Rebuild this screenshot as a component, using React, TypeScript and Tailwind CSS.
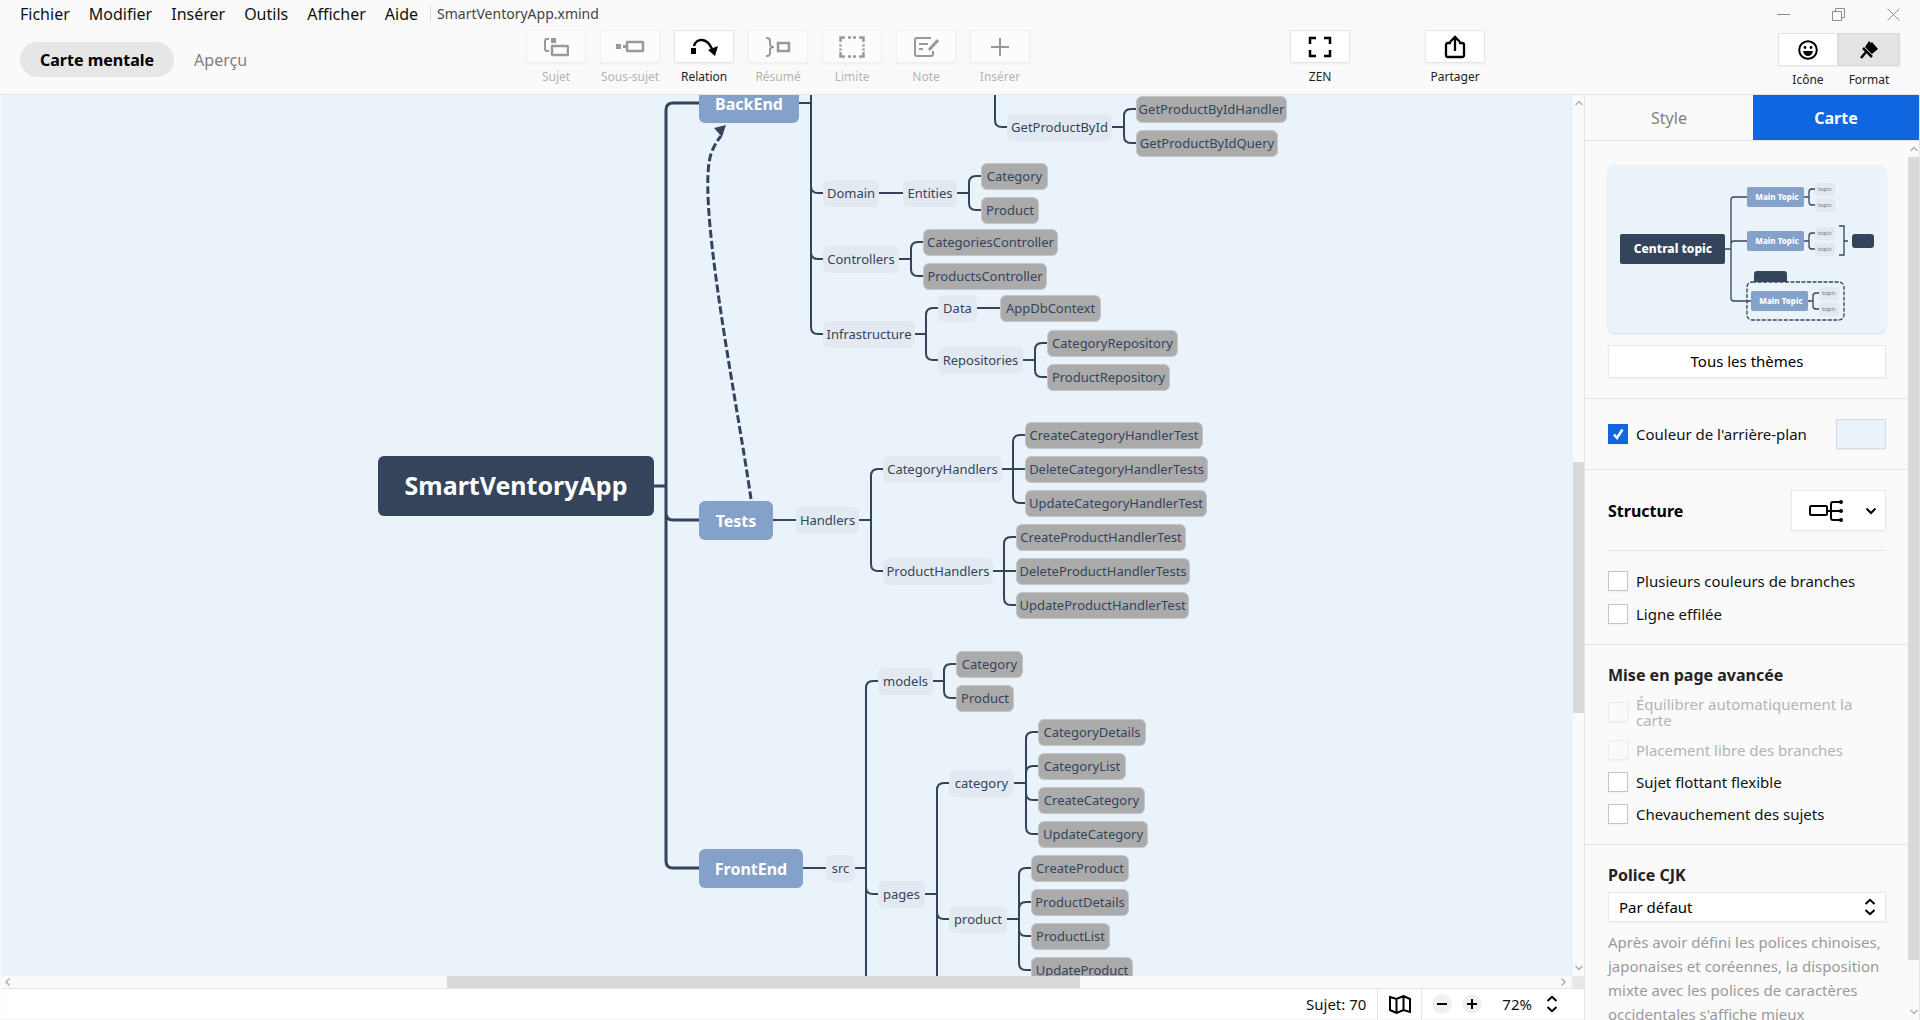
import React from "react";

type Kind = "root" | "main" | "sub" | "leaf";

interface Topic {
  label: string;
  kind: Kind;
  x: number;
  y: number;
  w: number;
  children?: Topic[];
  /** Branches that start or end outside the visible part of the map. */
  up?: boolean;
  down?: boolean;
}

const leaf = (label: string, x: number, y: number, w: number): Topic => ({ label, kind: "leaf", x, y, w });

const sub = (label: string, x: number, y: number, w: number, children?: Topic[], down?: boolean): Topic => ({
  label,
  kind: "sub",
  x,
  y,
  w,
  children,
  down,
});

const tree: Topic = {
  label: "SmartVentoryApp",
  kind: "root",
  x: 377,
  y: 391,
  w: 276,
  children: [
    {
      label: "BackEnd",
      kind: "main",
      x: 698,
      y: 8,
      w: 100,
      up: true,
      children: [
        sub("Domain", 822, 98, 56, [
          sub("Entities", 902, 98, 54, [leaf("Category", 980, 81, 67), leaf("Product", 980, 115, 58)]),
        ]),
        sub("Controllers", 822, 164, 76, [
          leaf("CategoriesController", 922, 147, 135),
          leaf("ProductsController", 922, 181, 124),
        ]),
        sub("Infrastructure", 822, 239, 92, [
          sub("Data", 937, 213, 39, [leaf("AppDbContext", 999, 213, 101)]),
          sub("Repositories", 937, 265, 85, [
            leaf("CategoryRepository", 1046, 248, 131),
            leaf("ProductRepository", 1046, 282, 123),
          ]),
        ]),
      ],
    },
    {
      label: "Tests",
      kind: "main",
      x: 698,
      y: 425,
      w: 74,
      children: [
        sub("Handlers", 795, 425, 63, [
          sub("CategoryHandlers", 882, 374, 119, [
            leaf("CreateCategoryHandlerTest", 1024, 340, 178),
            leaf("DeleteCategoryHandlerTests", 1024, 374, 183),
            leaf("UpdateCategoryHandlerTest", 1024, 408, 182),
          ]),
          sub("ProductHandlers", 882, 476, 110, [
            leaf("CreateProductHandlerTest", 1015, 442, 170),
            leaf("DeleteProductHandlerTests", 1015, 476, 174),
            leaf("UpdateProductHandlerTest", 1015, 510, 173),
          ]),
        ]),
      ],
    },
    {
      label: "FrontEnd",
      kind: "main",
      x: 698,
      y: 773,
      w: 104,
      children: [
        sub(
          "src",
          825,
          773,
          29,
          [
            sub("models", 877, 586, 55, [leaf("Category", 955, 569, 67), leaf("Product", 955, 603, 58)]),
            sub(
              "pages",
              877,
              799,
              47,
              [
                sub("category", 948, 688, 65, [
                  leaf("CategoryDetails", 1037, 637, 108),
                  leaf("CategoryList", 1037, 671, 88),
                  leaf("CreateCategory", 1037, 705, 107),
                  leaf("UpdateCategory", 1037, 739, 110),
                ]),
                sub("product", 948, 824, 58, [
                  leaf("CreateProduct", 1030, 773, 98),
                  leaf("ProductDetails", 1030, 807, 98),
                  leaf("ProductList", 1030, 841, 79),
                  leaf("UpdateProduct", 1030, 875, 102),
                ]),
              ],
              true,
            ),
          ],
          true,
        ),
      ],
    },
  ],
};

const offscreenParentBranch: Topic = sub("GetProductById", 1006, 32, 105, [
  leaf("GetProductByIdHandler", 1135, 14, 151),
  leaf("GetProductByIdQuery", 1135, 48, 142),
]);

const kindClass: Record<Kind, string> = {
  root: "h-[60px] rounded-md bg-[#34455b] text-[25px] font-bold text-white",
  main: "h-[39px] rounded-md bg-[#84a1c9] text-[16px] font-bold text-white",
  sub: "h-[27px] rounded-md bg-[#e2e9f1] text-[13px] text-[#34455b]",
  leaf: "h-[27px] rounded-md border border-[#c3c7ca] bg-[#ababab] text-[13px] text-[#34455b]",
};

/** Distance from a topic's top edge to the line that meets it. */
const rise: Record<Kind, number> = { root: 30, main: 19, sub: 13, leaf: 13 };

const flatten = (t: Topic): Topic[] => [t, ...(t.children ?? []).flatMap(flatten)];

function branchPath(t: Topic): string {
  const kids = t.children ?? [];
  if (!kids.length) return "";
  const end = t.x + t.w;
  const trunk = kids[0].x - 12 + (t.kind === "root" ? -21 : 0);
  const r = 7;
  let d = `M${end} ${t.y}H${trunk}`;
  for (const k of kids) {
    if (k.y === t.y) d += `M${trunk} ${t.y}H${k.x}`;
    else {
      const s = k.y > t.y ? -r : r;
      d += `M${trunk} ${t.y}V${k.y + s}Q${trunk} ${k.y} ${trunk + r} ${k.y}H${k.x}`;
    }
  }
  if (t.up) d += `M${trunk} ${t.y}V-10`;
  if (t.down) d += `M${trunk} ${t.y}V1200`;
  return d;
}

function MindMap() {
  const topics = [...flatten(tree), ...flatten(offscreenParentBranch)];
  return (
    <div className="relative min-h-0 min-w-0 flex-1 overflow-hidden bg-[#ebf3fa] font-['Noto_Sans',sans-serif]">
      <svg className="absolute inset-0 h-full w-full" fill="none" stroke="#34455b" aria-hidden="true">
        {topics.map((t, i) => (
          <path key={i} d={branchPath(t)} strokeWidth={t.kind === "root" ? 3 : 2} />
        ))}
        <path d="M994 -10V25Q994 32 1001 32H1006" strokeWidth="2" />
        <path d="M750 404C735 300 692 90 712 54Q715 47 720 41" strokeWidth="3" strokeDasharray="8 3" />
        <path d="M725 30L713 33L721 42Z" fill="#34455b" stroke="none" />
      </svg>
      {topics.map((t, i) => (
        <div
          key={i}
          className={`absolute flex items-center justify-center whitespace-nowrap ${kindClass[t.kind]}`}
          style={{ left: t.x, top: t.y - rise[t.kind], width: t.w }}
        >
          {t.label}
        </div>
      ))}
    </div>
  );
}

const menus = ["Fichier", "Modifier", "Insérer", "Outils", "Afficher", "Aide"];

function Glyph({ w, h, children }: { w: number; h: number; children: React.ReactNode }) {
  return (
    <svg width={w} height={h} viewBox={`0 0 ${w} ${h}`} fill="none" stroke="currentColor" strokeWidth="2" aria-hidden="true">
      {children}
    </svg>
  );
}

const tools = [
  {
    label: "Sujet",
    icon: (
      <Glyph w={26} h={20}>
        <path d="M6 2H4Q2 2 2 4V12Q2 14 4 14H6" />
        <path d="M8 1h5v5h-5z" fill="currentColor" stroke="none" />
        <rect x="9" y="9" width="16" height="9" strokeWidth="2.5" rx="0.5" />
      </Glyph>
    ),
  },
  {
    label: "Sous-sujet",
    icon: (
      <Glyph w={30} h={20}>
        <path d="M1 7h5v5H1zM8 8h4v3H8z" fill="currentColor" stroke="none" />
        <rect x="12" y="5" width="16" height="9" strokeWidth="2.5" rx="0.5" />
      </Glyph>
    ),
  },
  {
    label: "Relation",
    active: true,
    icon: (
      <Glyph w={28} h={20}>
        <path d="M1 11h5v6H1zM18 13L28 9L25 19Z" fill="currentColor" stroke="none" />
        <path d="M4 9C6 1 17 0 22 12" strokeWidth="2.5" />
      </Glyph>
    ),
  },
  {
    label: "Résumé",
    icon: (
      <Glyph w={26} h={22}>
        <path d="M1 2H2Q5 2 5 5V8Q5 11 9 11Q5 11 5 14V17Q5 20 2 20H1" />
        <rect x="13" y="7" width="11" height="8" strokeWidth="2.5" />
      </Glyph>
    ),
  },
  {
    label: "Limite",
    icon: (
      <Glyph w={26} h={22}>
        <path
          d="M1.500 6V1.500H6M9 1.500h3M14 1.500h3M20 1.500H24.500V6M24.500 8.500v2M24.500 12.500v2M24.500 16V20.500H20M17 20.500h-3M12 20.500h-3M6 20.500H1.500V16M1.500 14.500v-2M1.500 10.500v-2"
          strokeWidth="2.5"
        />
      </Glyph>
    ),
  },
  {
    label: "Note",
    icon: (
      <Glyph w={26} h={22}>
        <path d="M18 2H4Q2 2 2 4V18Q2 20 4 20H18Q20 20 20 18V15M6 8h9M6 13h4" />
        <path d="M25 4L16 14" strokeWidth="3" />
      </Glyph>
    ),
  },
  {
    label: "Insérer",
    icon: (
      <Glyph w={20} h={20}>
        <path d="M10 1V19M1 10H19" />
      </Glyph>
    ),
  },
];

function ToolButton({ label, icon, active }: { label: string; icon: React.ReactNode; active?: boolean }) {
  return (
    <button
      className={`flex flex-col items-center gap-[5px] text-xs ${active ? "text-[#222]" : "text-[#b4b4b4]"}`}
      disabled={!active}
    >
      <span
        className={`flex h-[33px] w-[60px] items-center justify-center border shadow-xs ${
          active ? "border-[#e6e6e6] bg-white text-black" : "border-[#f1f1f1] bg-[#fcfcfc] text-[#999]"
        }`}
      >
        {icon}
      </span>
      <span className="leading-[18px]">{label}</span>
    </button>
  );
}

function Header() {
  return (
    <header className="flex h-[95px] shrink-0 flex-col border-b border-[#e4e4e4]">
      <div className="flex h-7 items-center">
        <nav className="flex items-center gap-[19px] pl-5 text-[16px] text-[#111]">
          {menus.map((m) => (
            <button key={m} className="leading-5">
              {m}
            </button>
          ))}
        </nav>
        <span className="ml-3 border-l border-[#ddd] pl-1.5 text-[14px] leading-4 text-[#444]">SmartVentoryApp.xmind</span>
        <div className="ml-auto flex items-center gap-[42px] pr-5 text-[#8c8c8c]">
          <button aria-label="Réduire">
            <svg width="13" height="13" viewBox="0 0 13 13" fill="none" stroke="currentColor">
              <path d="M0 6.500H13" />
            </svg>
          </button>
          <button aria-label="Restaurer">
            <svg width="13" height="13" viewBox="0 0 13 13" fill="none" stroke="currentColor">
              <path d="M0.500 3.500h9v9h-9zM3.500 3.500v-3h9v9h-3" />
            </svg>
          </button>
          <button aria-label="Fermer">
            <svg width="13" height="13" viewBox="0 0 13 13" fill="none" stroke="currentColor">
              <path d="M0.500 0.500L12.500 12.500M12.500 0.500L0.500 12.500" />
            </svg>
          </button>
        </div>
      </div>
      <div className="flex flex-1 items-start pr-5 pl-5">
        <div className="mt-3.5 flex flex-[505] items-center gap-5">
          <button className="h-[35px] rounded-full bg-[#e6e6e6] px-5 text-[16px] font-bold text-black">Carte mentale</button>
          <button className="text-[16px] text-[#808080]">Aperçu</button>
        </div>
        <div className="mt-0.5 flex gap-3.5">
          {tools.map((t) => (
            <ToolButton key={t.label} {...t} />
          ))}
        </div>
        <div className="mt-0.5 ml-[260px] flex gap-[75px]">
          <ToolButton
            label="ZEN"
            active
            icon={
              <Glyph w={24} h={22}>
                <path d="M2 8V2H8M16 2H22V8M22 14V20H16M8 20H2V14" strokeWidth="2.5" />
              </Glyph>
            }
          />
          <ToolButton
            label="Partager"
            active
            icon={
              <Glyph w={22} h={24}>
                <path d="M7 8H4Q2 8 2 10V20Q2 22 4 22H18Q20 22 20 20V10Q20 8 18 8H15" strokeWidth="2.3" />
                <path d="M11 16V3M6 7L11 2L16 7" strokeWidth="2.3" />
              </Glyph>
            }
          />
        </div>
        <div className="mt-[5px] flex flex-[414] justify-end text-xs text-[#222]">
          <button className="flex w-[60px] flex-col items-center gap-[5px]">
            <span className="flex h-[33px] w-full items-center justify-center border border-[#e2e2e2] bg-white text-black shadow-xs">
              <Glyph w={20} h={20}>
                <circle cx="10" cy="10" r="8.800" />
                <path d="M5 11H15Q14 16 10 16T5 11Z" fill="currentColor" stroke="none" />
                <circle cx="7" cy="7.500" r="1.400" fill="currentColor" stroke="none" />
                <circle cx="13" cy="7.500" r="1.400" fill="currentColor" stroke="none" />
              </Glyph>
            </span>
            <span className="leading-[18px]">Icône</span>
          </button>
          <button className="flex w-[62px] flex-col items-center gap-[5px]">
            <span className="flex h-[33px] w-full items-center justify-center border border-[#d8d8d8] bg-[#e3e3e3] text-black shadow-xs">
              <Glyph w={20} h={20}>
                <path d="M10 1L12 3L13 2L19 9L13 14L6 7Z" fill="currentColor" stroke="none" />
                <path d="M4 8L13 17M7 12L2 18" strokeWidth="2.500" />
              </Glyph>
            </span>
            <span className="leading-[18px]">Format</span>
          </button>
        </div>
      </div>
    </header>
  );
}

function Chevron({ d, className = "" }: { d: string; className?: string }) {
  return (
    <svg width="10" height="10" viewBox="0 0 10 10" fill="none" stroke="#b0b0b0" strokeWidth="1.5" className={className} aria-hidden="true">
      <path d={d} />
    </svg>
  );
}

const UP = "M1.500 7L5 3.500L8.500 7";
const DOWN = "M1.500 3L5 6.500L8.500 3";
const LEFT = "M6.500 1.500L3 5L6.500 8.500";
const RIGHT = "M3.500 1.500L7 5L3.500 8.500";

function VScroll({ before, thumb, after }: { before: string; thumb: string; after: string }) {
  return (
    <div className="flex w-[11px] shrink-0 flex-col items-center bg-[#fafafa]">
      <div className="flex h-4 shrink-0 items-center">
        <Chevron d={UP} />
      </div>
      <div className={before} />
      <div className={`w-full bg-[#d9d9d9] ${thumb}`} />
      <div className={after} />
      <div className="flex h-4 shrink-0 items-center">
        <Chevron d={DOWN} />
      </div>
    </div>
  );
}

function UpDown() {
  return (
    <svg width="12" height="18" viewBox="0 0 12 18" fill="none" stroke="black" strokeWidth="2" aria-hidden="true">
      <path d="M1.500 6L6 1.800L10.500 6M1.500 12L6 16.200L10.500 12" />
    </svg>
  );
}

function StatusBar() {
  return (
    <footer className="flex h-[31px] shrink-0 items-stretch justify-end border-b border-[#f4f4f4] bg-white text-[15px] text-[#111]">
      <span className="flex items-center pr-[11px]">Sujet: 70</span>
      <button className="flex w-[45px] items-center justify-center border-x border-[#e4e4e4]" aria-label="Plan">
        <svg width="22" height="19" viewBox="0 0 22 19" fill="none" stroke="black" strokeWidth="2" aria-hidden="true">
          <path d="M1 2L7.500 4L14.500 1L21 4V17L14.500 15L7.500 18L1 15ZM7.500 4V18M14.500 1V15" />
        </svg>
      </button>
      <div className="flex items-center gap-2.5 pl-2.5">
        <button className="flex size-5 items-center justify-center rounded-full bg-[#f0f0f0]" aria-label="Zoom arrière">
          <svg width="10" height="10" viewBox="0 0 10 10" stroke="black" strokeWidth="2">
            <path d="M0 5H10" />
          </svg>
        </button>
        <button className="flex size-5 items-center justify-center rounded-full bg-[#f0f0f0]" aria-label="Zoom avant">
          <svg width="10" height="10" viewBox="0 0 10 10" stroke="black" strokeWidth="2">
            <path d="M0 5H10M5 0V10" />
          </svg>
        </button>
      </div>
      <button className="flex items-center gap-3.5 pr-[26px] pl-5">
        72%
        <UpDown />
      </button>
    </footer>
  );
}

function ThemePreview() {
  const mains = [
    { x: 139, y: 32, t: 207 },
    { x: 139, y: 76, t: 207 },
    { x: 143, y: 136, t: 211 },
  ];
  return (
    <svg
      viewBox="0 0 278 168"
      className="w-full rounded-md bg-[#ebf3fa] font-['Noto_Sans',sans-serif] shadow"
      role="img"
      aria-label="Thème"
    >
      <g fill="none" stroke="#34455b" strokeWidth="1.300">
        <path d="M117 84H123M139 32H126Q123 32 123 35V133Q123 136 126 136H143M123 79Q123 76 126 76H139" />
        {mains.map((m) => (
          <path
            key={m.y}
            d={`M${m.x + 57} ${m.y}H${m.t - 6}M${m.t} ${m.y - 8}H${m.t - 3}Q${m.t - 6} ${m.y - 8} ${m.t - 6} ${m.y - 5}V${m.y + 5}Q${m.t - 6} ${m.y + 8} ${m.t - 3} ${m.y + 8}H${m.t}`}
          />
        ))}
        <path d="M231 61H236V90H231M236 76H240" />
        <rect x="139" y="117" width="97" height="38" rx="5" strokeDasharray="4 1.500" />
      </g>
      <rect x="12" y="69" width="105" height="30" rx="2" fill="#34455b" />
      <text x="65" y="88" textAnchor="middle" fill="white" fontSize="12" fontWeight="800">
        Central topic
      </text>
      {mains.map((m) => (
        <g key={m.y}>
          <rect x={m.x} y={m.y - 10} width="57" height="20" rx="2" fill="#84a1c9" />
          <text x={m.x + 30} y={m.y + 3} textAnchor="middle" fill="white" fontSize="8" fontWeight="800">
            Main Topic
          </text>
          {[-8, 8].map((o) => (
            <g key={o}>
              <rect x={m.t} y={m.y + o - 6} width="20" height="13" rx="2" fill="#e2e9f1" />
              <text x={m.t + 10} y={m.y + o + 2} textAnchor="middle" fill="#6b7889" fontSize="6">
                topic
              </text>
            </g>
          ))}
        </g>
      ))}
      <rect x="244" y="69" width="22" height="14" rx="3" fill="#34455b" />
      <path d="M146 117V109Q146 106 149 106H176Q179 106 179 109V117Z" fill="#34455b" />
    </svg>
  );
}

function Check({ label, checked, disabled }: { label: string; checked?: boolean; disabled?: boolean }) {
  return (
    <label className={`flex items-center gap-2 ${disabled ? "text-[#b4b4b4]" : "text-[#111]"}`}>
      <span className="relative flex size-5 shrink-0">
        <input
          type="checkbox"
          defaultChecked={checked}
          disabled={disabled}
          className="peer size-5 appearance-none border border-[#c4c4c4] bg-white shadow-xs checked:border-[#1066e0] checked:bg-[#1066e0] disabled:border-[#ececec] disabled:bg-[#fafafa]"
        />
        <svg
          viewBox="0 0 20 20"
          className="pointer-events-none absolute inset-0 hidden peer-checked:block"
          fill="none"
          stroke="white"
          strokeWidth="2.500"
          aria-hidden="true"
        >
          <path d="M6 10.500L9 14L14.500 5.500" />
        </svg>
      </span>
      <span className="leading-4">{label}</span>
    </label>
  );
}

function Sidebar() {
  return (
    <aside className="flex w-[336px] shrink-0 flex-col border-r border-l border-[#e4e4e4] bg-[#fafafa]">
      <div className="flex h-[46px] shrink-0 border-b border-[#e4e4e4] text-[16px]">
        <button className="flex-1 text-[#808080]">Style</button>
        <button className="w-[166px] bg-[#1066e0] font-bold text-white">Carte</button>
      </div>
      <div className="flex min-h-0 flex-1">
        <div className="min-w-0 flex-1 overflow-hidden text-[15px]">
          <section className="flex flex-col gap-3 pt-6 pr-[22px] pb-5 pl-[23px]">
            <ThemePreview />
            <button className="h-[33px] border border-[#e8e8e8] bg-white text-black shadow-xs">Tous les thèmes</button>
          </section>
          <section className="flex items-center justify-between border-t border-[#e4e4e4] py-5 pr-[22px] pl-[23px]">
            <Check label="Couleur de l'arrière-plan" checked />
            <button
              className="h-[30px] w-[50px] border border-[#d3dae1] bg-[#ebf3fa] shadow-xs"
              aria-label="Choisir la couleur de l'arrière-plan"
            />
          </section>
          <section className="border-t border-[#e4e4e4] pt-5 pr-[22px] pb-5 pl-[23px]">
            <div className="flex items-center justify-between pb-[19px]">
              <h2 className="text-[16px] font-bold text-black">Structure</h2>
              <button
                className="flex h-[41px] w-[95px] items-center justify-between border border-[#e8e8e8] bg-white pr-2 pl-4 shadow-xs"
                aria-label="Structure"
              >
                <svg width="36" height="24" viewBox="0 0 36 24" fill="none" stroke="black" strokeWidth="2" aria-hidden="true">
                  <rect x="2" y="7" width="17" height="9" rx="1" />
                  <path d="M19 12H33M33 3H25Q23 3 23 5V19Q23 21 25 21H33" />
                  <g fill="black" stroke="none">
                    <circle cx="33" cy="3" r="2" />
                    <circle cx="33" cy="12" r="2" />
                    <circle cx="33" cy="21" r="2" />
                  </g>
                </svg>
                <svg width="12" height="10" viewBox="0 0 12 10" fill="none" stroke="black" strokeWidth="2" aria-hidden="true">
                  <path d="M1.500 2.500L6 7L10.500 2.500" />
                </svg>
              </button>
            </div>
            <div className="flex flex-col gap-[13px] border-t border-[#e4e4e4] pt-5">
              <Check label="Plusieurs couleurs de branches" />
              <Check label="Ligne effilée" />
            </div>
          </section>
          <section className="border-t border-[#e4e4e4] pt-5 pr-[22px] pb-5 pl-[23px]">
            <h2 className="text-[16px] leading-5 font-bold text-[#222]">Mise en page avancée</h2>
            <div className="flex flex-col gap-3 pt-[11px]">
              <Check label="Équilibrer automatiquement la carte" disabled />
              <Check label="Placement libre des branches" disabled />
              <Check label="Sujet flottant flexible" />
              <Check label="Chevauchement des sujets" />
            </div>
          </section>
          <section className="border-t border-[#e4e4e4] pt-5 pr-[22px] pl-[23px]">
            <label htmlFor="cjk" className="block text-[16px] leading-5 font-bold text-[#222]">
              Police CJK
            </label>
            <div className="relative mt-[7px]">
              <select
                id="cjk"
                className="h-[30px] w-full appearance-none border border-[#e8e8e8] bg-white px-2.5 text-black shadow-xs"
              >
                <option>Par défaut</option>
              </select>
              <span className="pointer-events-none absolute inset-y-0 right-2.5 flex items-center">
                <UpDown />
              </span>
            </div>
            <p className="pt-2 leading-6 text-[#9a9a9a]">
              Après avoir défini les polices chinoises, japonaises et coréennes, la disposition mixte avec les polices de
              caractères occidentales s'affiche mieux
            </p>
          </section>
        </div>
        <VScroll before="" thumb="flex-1" after="h-11 shrink-0" />
      </div>
    </aside>
  );
}

export default function App() {
  return (
    <div className="flex h-screen flex-col overflow-hidden bg-[#fafafa] font-['Noto_Sans','Open_Sans',sans-serif]">
      <Header />
      <div className="flex min-h-0 flex-1">
        <main className="flex min-w-0 flex-1 flex-col pl-px">
          <div className="flex min-h-0 flex-1">
            <MindMap />
            <VScroll before="flex-[351]" thumb="flex-[251]" after="flex-[247]" />
          </div>
          <div className="flex h-[13px] shrink-0 items-center border-b border-[#e4e4e4] bg-[#fafafa]">
            <Chevron d={LEFT} className="ml-0.5" />
            <div className="flex h-full flex-1 pl-0.5">
              <div className="flex-[432]" />
              <div className="flex-[632] bg-[#d9d9d9]" />
              <div className="flex-[478]" />
            </div>
            <Chevron d={RIGHT} className="mr-1" />
            <div className="h-full w-3 bg-[#e8e8e8]" />
          </div>
          <StatusBar />
        </main>
        <Sidebar />
      </div>
    </div>
  );
}
